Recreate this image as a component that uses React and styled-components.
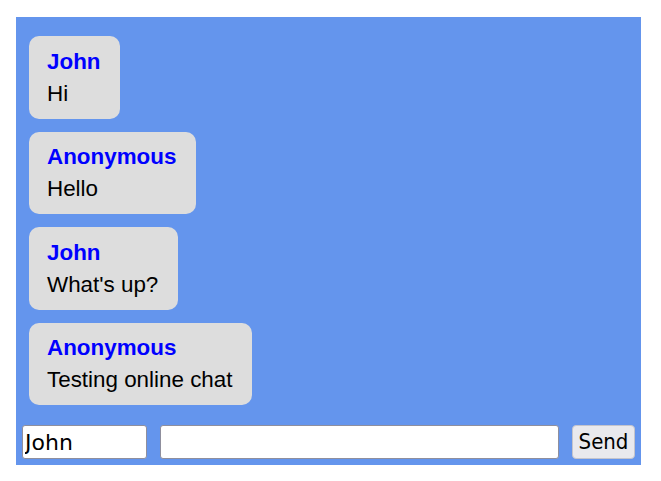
import styled, { createGlobalStyle } from 'styled-components'

const GlobalStyle = createGlobalStyle`
    body {
        margin: 0;
        font-family: "Liberation Sans", Arial, sans-serif;
        background: #fff;
    }
`

const ChatBox = styled.div`
    & {
        width: 625px;
        margin: 17px 0 0 16px;
        background-color: #6495ed;
        display: flex;
        flex-direction: column;
    }
`

const MessageList = styled.div`
    & {
        display: flex;
        flex-direction: column;
        align-items: flex-start;
        gap: 13px;
        padding: 19px 13px 14px;
    }
`

const Bubble = styled.div`
    & {
        background-color: #dddddd;
        border-radius: 10px;
        padding: 12.5px 20px 12px 18px;
        font-size: 22.4px;
        line-height: 25.75px;
    }
`

const Author = styled.div`
    & {
        font-weight: bold;
        color: ${(props) => props.color || '#0000ff'};
        margin-bottom: 6.5px;
    }
`

const Text = styled.div`
    & {
        color: #000;
    }
`

const InputRow = styled.form`
    & {
        display: flex;
        gap: 13px;
        padding: 6px;
        align-items: stretch;
    }
`

const Field = styled.input`
    & {
        box-sizing: border-box;
        width: ${(props) => props.width || 'auto'};
        min-width: 0;
        flex-grow: ${(props) => (props.grow ? 1 : 0)};
        height: 34px;
        font-family: "DejaVu Sans", sans-serif;
        font-size: 22px;
        padding: 0 2px;
        border: 1px solid #8f8f9d;
        border-radius: 3px;
        background: #fff;
        color: #000;
        outline: none;
    }
`

const SendButton = styled.button`
    & {
        box-sizing: border-box;
        height: 34px;
        width: 63px;
        font-family: "DejaVu Sans Condensed", "DejaVu Sans", sans-serif;
        font-stretch: condensed;
        font-size: 22px;
        padding: 0 0 1px;
        border: 1px solid #c4c4cc;
        border-radius: 4px;
        background-color: #e9e9ed;
        color: #000;
        cursor: pointer;
    }
`

const messages = [
    { author: 'John', text: 'Hi' },
    { author: 'Anonymous', text: 'Hello' },
    { author: 'John', text: "What's up?" },
    { author: 'Anonymous', text: 'Testing online chat' },
]

export default function App() {
    const handleSubmit = (e) => {
        e.preventDefault()
    }
    return (
        <>
            <GlobalStyle />
            <ChatBox>
                <MessageList>
                    {messages.map((m, i) => (
                        <Bubble key={i}>
                            <Author>{m.author}</Author>
                            <Text>{m.text}</Text>
                        </Bubble>
                    ))}
                </MessageList>
                <InputRow onSubmit={handleSubmit}>
                    <Field width="125px" defaultValue="John" />
                    <Field grow />
                    <SendButton>Send</SendButton>
                </InputRow>
            </ChatBox>
        </>
    )
}
